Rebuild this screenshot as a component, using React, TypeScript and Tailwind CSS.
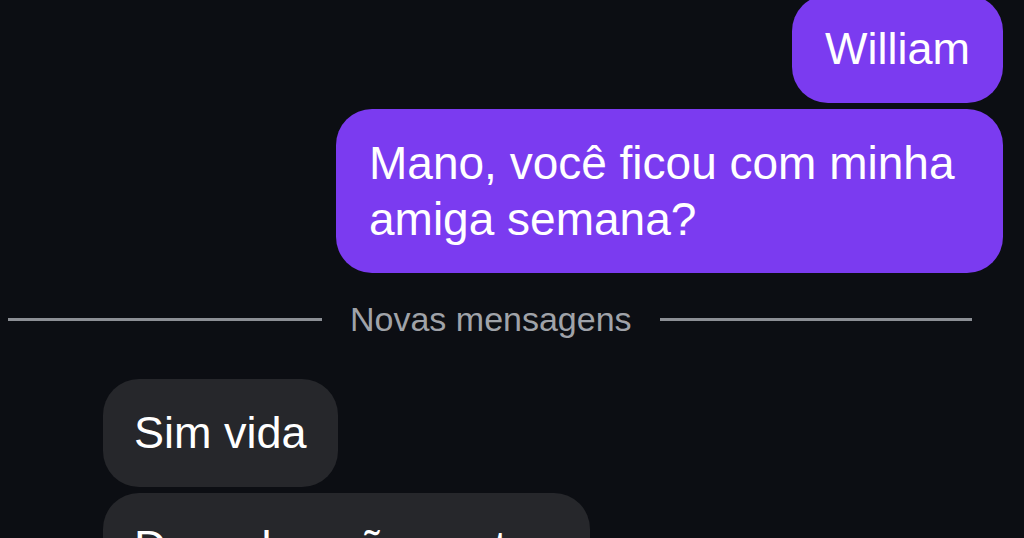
import React from 'react';

const font = { fontFamily: '"Liberation Sans", Arial, sans-serif' };

const App: React.FC = () => {
  return (
    <div
      className="w-[1024px] h-[538px] overflow-hidden bg-[#0c0e13] flex flex-col"
      style={font}
    >
      {/* sent messages */}
      <div className="flex flex-col items-end gap-[6px] pr-[21px] -mt-[5px]">
        <div className="bg-[#7b3bf0] text-white text-[45px] leading-[56px] rounded-[36px] pl-[33px] pr-[33px] py-[26px]">
          William
        </div>
        <div className="w-[667px] bg-[#7b3bf0] text-white text-[46px] leading-[56px] rounded-[36px] pl-[33px] pr-[36px] py-[26px]">
          Mano, você ficou com minha amiga semana?
        </div>
      </div>

      {/* divider */}
      <div className="flex items-center mt-[26px] pl-[8px] pr-[52px]">
        <div className="w-[314px] h-[3px] bg-[#8c8f95]" />
        <span className="px-[28px] text-[34px] leading-[40px] text-[#a0a3a9] whitespace-nowrap">
          Novas mensagens
        </span>
        <div className="flex-1 h-[3px] bg-[#8c8f95]" />
      </div>

      {/* received messages */}
      <div className="flex flex-col items-start gap-[6px] pl-[103px] mt-[40px]">
        <div className="bg-[#26272b] text-white text-[45px] leading-[56px] rounded-[36px] pl-[31px] pr-[31px] py-[26px]">
          Sim vida
        </div>
        <div className="w-[487px] bg-[#26272b] text-white text-[45px] leading-[56px] rounded-[36px] pl-[31px] pr-[30px] py-[26px]">
          Desculpa não contar
        </div>
      </div>
    </div>
  );
};

export default App;
